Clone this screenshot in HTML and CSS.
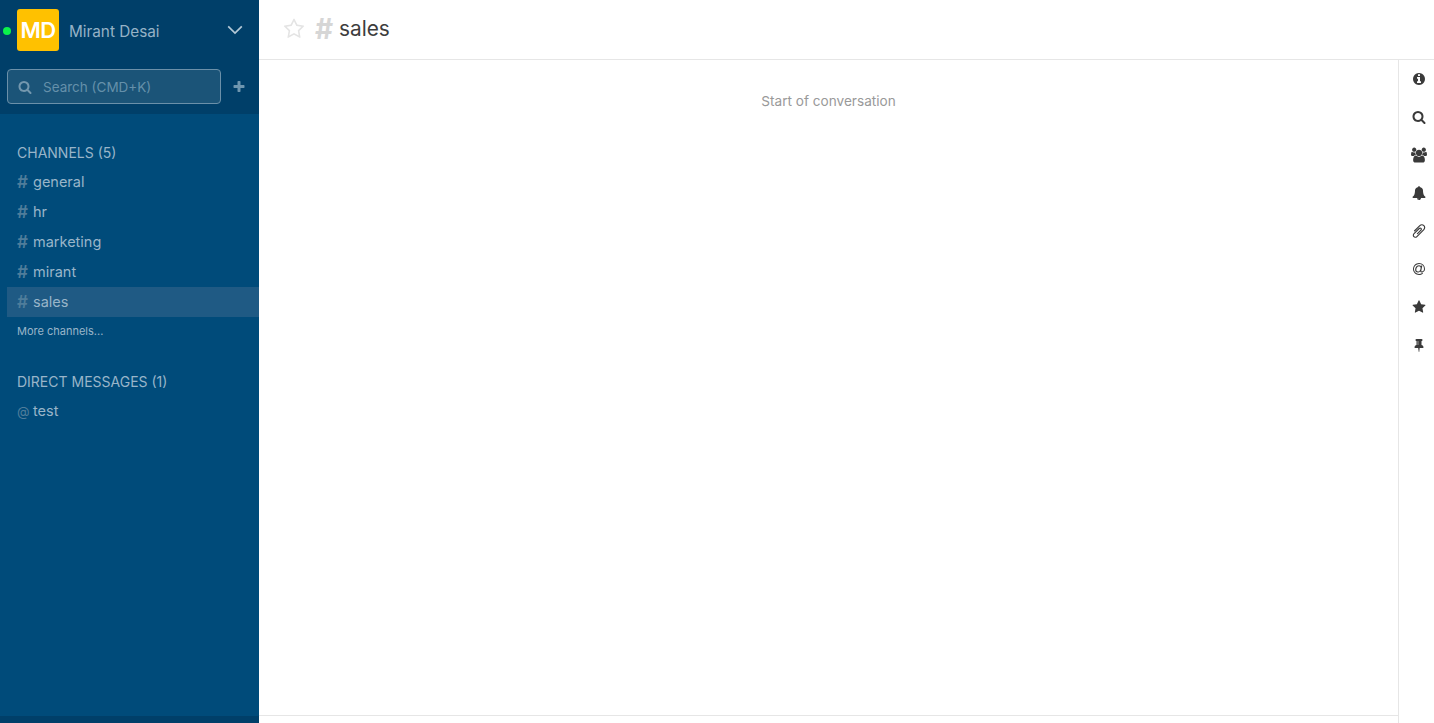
FILE: index.html
```html
<!DOCTYPE html>
<html lang="en">
<head>
<meta charset="utf-8">
<title>sales</title>
<link rel="stylesheet" href="styles.css">
</head>
<body>
<div class="app">
  <aside class="sidebar">
    <div class="side-top">
      <div class="user">
        <span class="status"></span>
        <span class="avatar">MD</span>
        <span class="username">Mirant Desai</span>
        <svg class="chevron" viewBox="0 0 16 10"><path d="M1.2 1.4 8 8l6.800-6.600" fill="none" stroke="currentColor" stroke-width="1.700"/></svg>
      </div>
      <div class="search-row">
        <div class="search">
          <svg class="search-icon" viewBox="0 0 1792 1792"><path fill="currentColor" d="M1216 832q0-185-131.500-316.500t-316.500-131.500-316.500 131.500-131.500 316.500 131.500 316.500 316.500 131.500 316.500-131.500 131.500-316.500zm512 832q0 52-38 90t-90 38q-54 0-90-38l-343-342q-179 124-399 124-143 0-273.500-55.500t-225-150-150-225-55.500-273.500 55.500-273.500 150-225 225-150 273.500-55.500 273.500 55.500 225 150 150 225 55.500 273.500q0 220-124 399l343 343q37 37 37 90z"/></svg>
          <span>Search (CMD+K)</span>
        </div>
        <svg class="plus" viewBox="0 0 1792 1792"><path fill="currentColor" d="M1600 736v192q0 40-28 68t-68 28h-416v416q0 40-28 68t-68 28h-192q-40 0-68-28t-28-68v-416h-416q-40 0-68-28t-28-68v-192q0-40 28-68t68-28h416v-416q0-40 28-68t68-28h192q40 0 68 28t28 68v416h416q40 0 68 28t28 68z"/></svg>
      </div>
    </div>
    <nav class="side-list">
      <div class="section-title">CHANNELS (5)</div>
      <div class="item"><span class="prefix">#</span>general</div>
      <div class="item"><span class="prefix">#</span>hr</div>
      <div class="item"><span class="prefix">#</span>marketing</div>
      <div class="item"><span class="prefix">#</span>mirant</div>
      <div class="item active"><span class="prefix">#</span>sales</div>
      <div class="more">More channels...</div>
      <div class="section-title dm">DIRECT MESSAGES (1)</div>
      <div class="item"><span class="prefix at">@</span>test</div>
    </nav>
    <div class="side-bottom"></div>
  </aside>
  <div class="content">
    <header class="topbar">
      <svg class="star-o" viewBox="0 0 1792 1792"><path fill="currentColor" d="M1201 1004l306-297-422-62-189-382-189 382-422 62 306 297-73 421 378-199 377 199zm527-357q0 22-26 48l-363 354 86 500q1 7 1 20 0 50-41 50-19 0-40-12l-449-236-449 236q-22 12-40 12-21 0-31.500-14.500t-10.500-35.500q0-6 2-20l86-500-364-354q-25-27-25-48 0-37 56-46l502-73 225-455q19-41 49-41t49 41l225 455 502 73q56 9 56 46z"/></svg>
      <span class="hash">#</span>
      <span class="title">sales</span>
    </header>
    <div class="body">
      <main class="main">
        <div class="messages"><p class="start">Start of conversation</p></div>
        <div class="composer"></div>
      </main>
      <div class="rail">
        <div class="rail-btn"><svg viewBox="0 0 1792 1792"><path fill="currentColor" d="M1152 1376v-160q0-14-9-23t-23-9h-96v-512q0-14-9-23t-23-9h-320q-14 0-23 9t-9 23v160q0 14 9 23t23 9h96v320h-96q-14 0-23 9t-9 23v160q0 14 9 23t23 9h448q14 0 23-9t9-23zm-128-896v-160q0-14-9-23t-23-9h-192q-14 0-23 9t-9 23v160q0 14 9 23t23 9h192q14 0 23-9t9-23zm640 416q0 209-103 385.500t-279.500 279.500-385.500 103-385.500-103-279.500-279.500-103-385.500 103-385.500 279.500-279.500 385.500-103 385.500 103 279.500 279.500 103 385.500z"/></svg></div>
        <div class="rail-btn"><svg viewBox="0 0 1792 1792"><path fill="currentColor" d="M1216 832q0-185-131.500-316.500t-316.500-131.500-316.500 131.500-131.500 316.500 131.500 316.500 316.500 131.500 316.500-131.500 131.500-316.500zm512 832q0 52-38 90t-90 38q-54 0-90-38l-343-342q-179 124-399 124-143 0-273.500-55.500t-225-150-150-225-55.500-273.500 55.500-273.500 150-225 225-150 273.500-55.500 273.500 55.500 225 150 150 225 55.500 273.500q0 220-124 399l343 343q37 37 37 90z"/></svg></div>
        <div class="rail-btn"><svg class="wide" viewBox="0 0 1920 1792"><path fill="currentColor" d="M593 896q-162 5-265 128h-134q-82 0-138-40.500t-56-118.500q0-353 124-353 6 0 43.500 21t97.500 42.500 119 21.500q67 0 133-23-5 37-5 66 0 139 81 256zm1071 637q0 120-73 189.500t-194 69.500h-874q-121 0-194-69.500t-73-189.500q0-53 3.500-103.500t14-109 26.500-108.500 43-97.500 62-81 85.500-53.500 111.500-20q10 0 43 21.500t73 48 107 48 135 21.500 135-21.500 107-48 73-48 43-21.500q61 0 111.500 20t85.500 53.500 62 81 43 97.500 26.500 108.500 14 109 3.500 103.500zm-1024-1277q0 106-75 181t-181 75-181-75-75-181 75-181 181-75 181 75 75 181zm704 384q0 159-112.500 271.500t-271.500 112.500-271.500-112.500-112.500-271.500 112.500-271.500 271.500-112.500 271.500 112.500 112.500 271.500zm576 225q0 78-56 118.500t-138 40.500h-134q-103-123-265-128 81-117 81-256 0-29-5-66 66 23 133 23 59 0 119-21.500t97.500-42.500 43.500-21q124 0 124 353zm-128-609q0 106-75 181t-181 75-181-75-75-181 75-181 181-75 181 75 75 181z"/></svg></div>
        <div class="rail-btn"><svg viewBox="0 0 1792 1792"><path fill="currentColor" d="M912 1696q0-16-16-16-59 0-101.500-42.500t-42.500-101.500q0-16-16-16t-16 16q0 73 51.500 124.500t124.500 51.500q16 0 16-16zm816-288q0 52-38 90t-90 38h-448q0 106-75 181t-181 75-181-75-75-181h-448q-52 0-90-38t-38-90q50-42 91-88t85-119.500 74.500-158.500 50-206 19.500-260q0-152 117-282.500t307-158.500q-8-19-8-39 0-40 28-68t68-28 68 28 28 68q0 20-8 39 190 28 307 158.500t117 282.500q0 139 19.500 260t50 206 74.500 158.500 85 119.500 91 88z"/></svg></div>
        <div class="rail-btn"><svg class="clip" viewBox="0 0 1792 1792"><path fill="currentColor" d="M1596 1385q0 117-79 196t-196 79q-135 0-235-100l-777-776q-113-115-113-271 0-159 110-270t269-111q158 0 273 113l605 606q10 10 10 22 0 16-30.500 46.500t-46.500 30.500q-13 0-23-10l-606-607q-79-77-181-77-106 0-179 75t-73 181q0 105 76 181l776 777q63 63 145 63 64 0 106-42t42-106q0-82-63-145l-581-581q-26-24-60-24-29 0-48 19t-19 48q0 32 25 59l410 410q10 10 10 22 0 16-31 47t-47 31q-12 0-22-10l-410-410q-63-61-63-149 0-82 57-139t139-57q88 0 149 63l581 581q100 98 100 235z"/></svg></div>
        <div class="rail-btn"><svg viewBox="0 0 1792 1792"><path fill="currentColor" d="M1100 775q0-108-53.500-169t-147.500-61q-63 0-124 30.500t-110 84.500-79.500 137-30.500 180q0 112 53.500 173t150.500 61q96 0 176-66.500t122.500-166 42.500-203.500zm564 121q0 111-37 197t-98.500 135-131.500 74.500-145 27.500q-6 0-15.500.5t-16.500.5q-95 0-142-53-28-33-33-83-52 66-131.500 110t-173.500 44q-161 0-249.500-95.500t-88.500-269.500q0-157 66-290t179-210.500 246-77.500q87 0 155 35.500t106 99.500l2-19 11-56q1-6 5.500-12t9.500-6h118q5 0 13 11 5 5 3 16l-120 614q-5 24-5 48 0 39 12.500 52t44.500 13q28-1 57-5.500t73-24 77-50 57-89.500 24-137q0-292-174-466t-466-174q-130 0-248.500 51t-204 136.500-136.500 204-51 248.500 51 248.500 136.500 204 204 136.500 248.500 51q228 0 405-144 11-9 24-8t21 12l41 49q8 12 7 24-2 13-12 22-102 83-227.500 128t-258.500 45q-156 0-298-61t-245-164-164-245-61-298 61-298 164-245 245-164 298-61q344 0 556 212t212 556z"/></svg></div>
        <div class="rail-btn"><svg viewBox="0 0 1792 1792"><path fill="currentColor" d="M1728 647q0 22-26 48l-363 354 86 500q1 7 1 20 0 21-10.500 35.500t-30.500 14.500q-19 0-40-12l-449-236-449 236q-22 12-40 12-21 0-31.500-14.500t-10.500-35.500q0-6 2-20l86-500-364-354q-25-27-25-48 0-37 56-46l502-73 225-455q19-41 49-41t49 41l225 455 502 73q56 9 56 46z"/></svg></div>
        <div class="rail-btn"><svg viewBox="0 0 1152 1792"><path fill="currentColor" d="M480 864v-448q0-14-9-23t-23-9-23 9-9 23v448q0 14 9 23t23 9 23-9 9-23zm672 352q0 26-19 45t-45 19h-429l-51 483q-2 12-10.500 20.500t-20.500 8.500h-1q-27 0-32-27l-76-485h-404q-26 0-45-19t-19-45q0-123 78.500-221.500t177.500-98.500v-512q-52 0-90-38t-38-90 38-90 90-38h640q52 0 90 38t38 90-38 90-90 38v512q99 0 177.500 98.500t78.500 221.500z"/></svg></div>
      </div>
    </div>
  </div>
</div>
</body>
</html>
```
FILE: styles.css
```css
* { box-sizing: border-box; }
html, body { margin: 0; height: 100%; overflow: hidden; }
body { font-family: Inter, "Liberation Sans", sans-serif; background: #fff; }
.app { display: flex; height: 723px; }

.sidebar { width: 259px; flex: none; display: flex; flex-direction: column; background: #004b7a; color: #99b5c9; }
.side-top { height: 114px; background: #003f69; padding-top: 9px; }
.user { display: flex; align-items: center; height: 42px; position: relative; padding-left: 17px; }
.status { position: absolute; left: 3px; top: 18px; width: 8px; height: 8px; border-radius: 50%; background: #0bf24b; }
.avatar { width: 42px; height: 42px; border-radius: 3px; background: #ffc100; color: #fff; font-size: 22px; font-weight: 600; display: flex; align-items: center; justify-content: center; letter-spacing: -0.5px; }
.username { margin-left: 10px; padding-top: 2px; font-size: 15.300px; color: #96b2c6; flex: 1; }
.chevron { width: 16px; height: 10px; margin-right: 16px; color: #b3c8d6; }
.search-row { display: flex; align-items: center; margin-top: 18px; padding-left: 7px; }
.search { width: 214px; height: 35px; border: 1px solid #6b90a9; border-radius: 4px; background: #1b5478; display: flex; align-items: center; padding-left: 10px; font-size: 13.500px; color: #6590aa; }
.search-icon { width: 14px; height: 14px; margin-right: 11px; color: #7397ae; }
.plus { width: 14px; height: 14px; margin-left: 11px; color: #6f96af; }

.side-list { flex: 1; padding: 29px 0 0 7px; }
.section-title { font-size: 14px; line-height: 20px; padding-left: 10px; color: #99b5c9; margin-bottom: 4px; }
.section-title.dm { margin-top: 34px; }
.item { height: 30px; display: flex; align-items: center; padding: 0 0 1px 10px; font-size: 14.500px; color: #99b5c9; }
.item.active { background: #1f5a84; }
.prefix { width: 16px; flex: none; color: #4f7d9b; font-size: 17px; font-weight: 600; }
.prefix.at { font-size: 13px; font-weight: 400; }
.more { font-size: 11px; line-height: 14px; padding: 7px 0 0 10px; color: #99b5c9; }
.side-bottom { height: 7px; background: #003f69; }

.content { flex: 1; min-width: 0; display: flex; flex-direction: column; }
.topbar { height: 60px; flex: none; border-bottom: 1px solid #e6e6e6; display: flex; align-items: center; padding: 0 0 2px 24px; }
.star-o { width: 22px; height: 22px; color: #e4e4e4; }
.hash { margin-left: 10px; font-size: 28px; font-weight: 700; color: #d6d6d6; width: 23px; }
.title { font-size: 20.800px; color: #3d3d3d; margin-left: 1px; }

.body { flex: 1; display: flex; min-height: 0; }
.main { flex: 1; min-width: 0; display: flex; flex-direction: column; }
.messages { flex: 1; }
.start { margin: 32px 0 0; text-align: center; font-size: 13.600px; line-height: 18px; color: #999; }
.composer { height: 8px; flex: none; border-top: 1px solid #e6e6e6; }
.rail { width: 36px; flex: none; border-left: 1px solid #e6e6e6; padding-left: 4px; }
.rail-btn { height: 38px; display: flex; align-items: center; justify-content: center; color: #3a3a3a; }
.rail-btn svg { width: 14px; height: 14px; }
.rail-btn svg.wide { width: 16px; height: 16px; }
.rail-btn svg.clip { width: 16px; height: 16px; transform: scaleX(-1); }
```
